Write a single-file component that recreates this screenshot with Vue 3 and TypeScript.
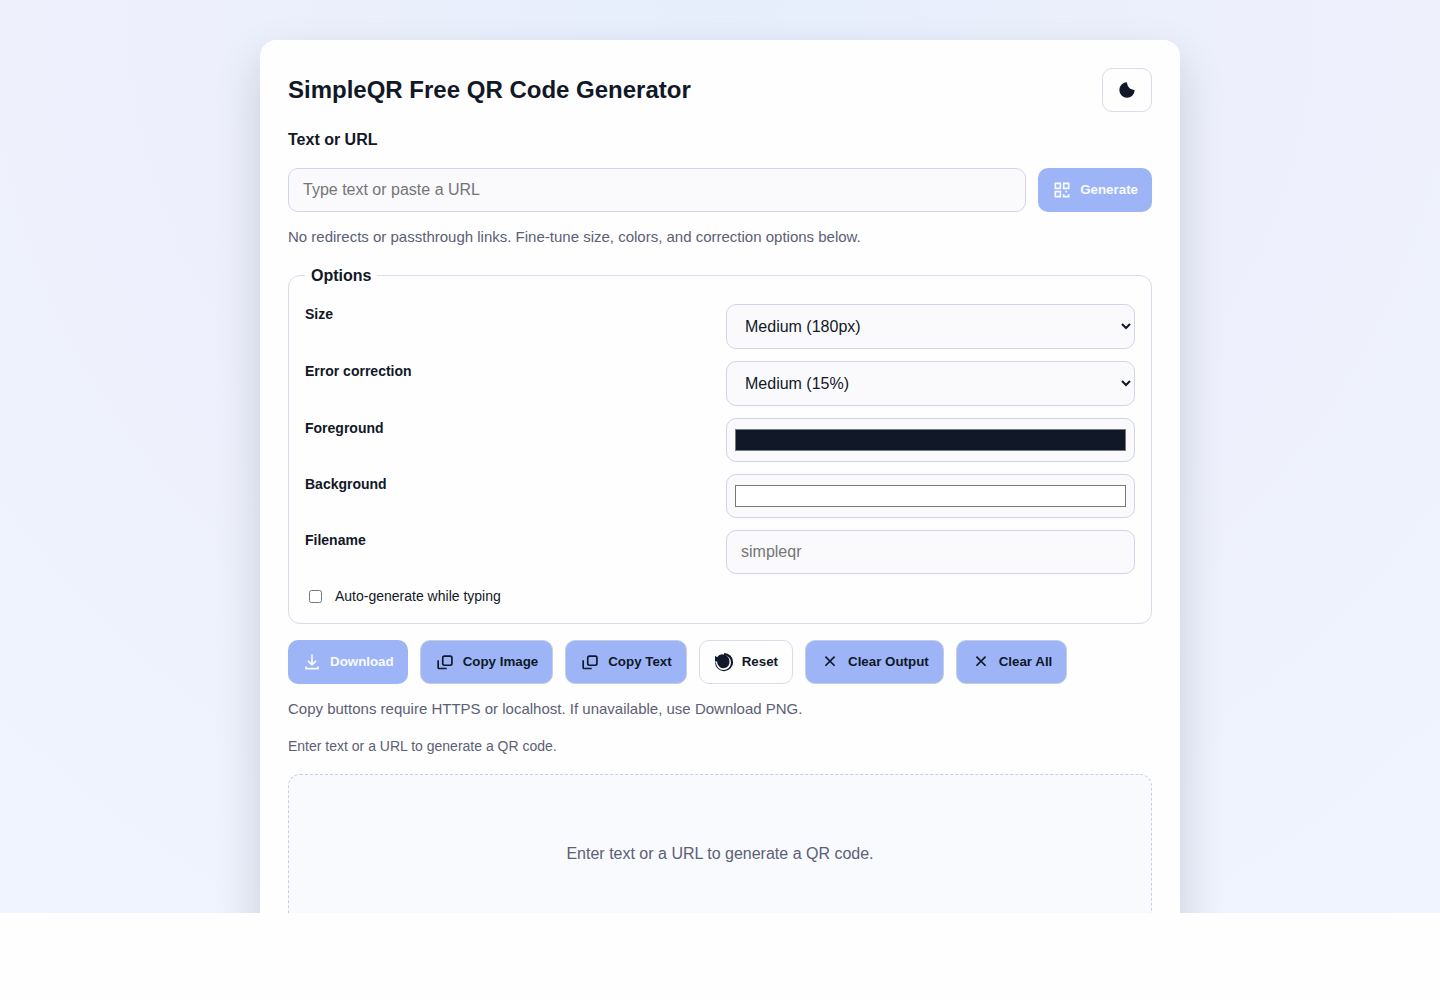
<script setup lang="ts">
import { ref } from 'vue'

interface Choice {
  value: string
  label: string
}

interface Action {
  label: string
  icon: 'download' | 'copy' | 'reset' | 'close'
  kind: 'primary' | 'muted' | 'plain'
}

const sizes: Choice[] = [
  { value: '128', label: 'Small (128px)' },
  { value: '180', label: 'Medium (180px)' },
  { value: '256', label: 'Large (256px)' },
]
const levels: Choice[] = [
  { value: 'L', label: 'Low (7%)' },
  { value: 'M', label: 'Medium (15%)' },
  { value: 'Q', label: 'Quartile (25%)' },
  { value: 'H', label: 'High (30%)' },
]
const actions: Action[] = [
  { label: 'Download', icon: 'download', kind: 'primary' },
  { label: 'Copy Image', icon: 'copy', kind: 'muted' },
  { label: 'Copy Text', icon: 'copy', kind: 'muted' },
  { label: 'Reset', icon: 'reset', kind: 'plain' },
  { label: 'Clear Output', icon: 'close', kind: 'muted' },
  { label: 'Clear All', icon: 'close', kind: 'muted' },
]

const text = ref('')
const size = ref('180')
const level = ref('M')
const foreground = ref('#111827')
const background = ref('#ffffff')
const filename = ref('')
const auto = ref(false)
</script>

<template>
  <div class="stage">
    <main class="card">
      <header class="head">
        <h1>SimpleQR Free QR Code Generator</h1>
        <button class="btn plain" type="button" aria-label="Toggle dark mode">
          <svg class="icon" viewBox="0 0 24 24" fill="currentColor">
            <path d="M12 2.800a9.200 9.200 0 1 0 9.200 9.200C16 12 12 8 12 2.800z" />
          </svg>
        </button>
      </header>

      <label class="title" for="text">Text or URL</label>
      <div class="entry">
        <input id="text" v-model="text" class="field" type="text" placeholder="Type text or paste a URL" />
        <button class="btn primary" type="button">
          <svg class="icon" viewBox="0 0 24 24" fill="currentColor">
            <path
              fill-rule="evenodd"
              d="M3 3h8v8H3zM5 5v4h4V5zM13 3h8v8h-8zM15 5v4h4V5zM3 13h8v8H3zM5 15v4h4v-4zM16 13h2v2h-2zM13 17h2v2h4v-2h2v4h-8z"
            />
          </svg>
          Generate
        </button>
      </div>
      <p class="note">No redirects or passthrough links. Fine-tune size, colors, and correction options below.</p>

      <fieldset class="options">
        <legend>Options</legend>
        <div class="grid">
          <label for="size">Size</label>
          <select id="size" v-model="size" class="field">
            <option v-for="s in sizes" :key="s.value" :value="s.value">{{ s.label }}</option>
          </select>
          <label for="level">Error correction</label>
          <select id="level" v-model="level" class="field">
            <option v-for="l in levels" :key="l.value" :value="l.value">{{ l.label }}</option>
          </select>
          <label for="fg">Foreground</label>
          <input id="fg" v-model="foreground" class="field color" type="color" />
          <label for="bg">Background</label>
          <input id="bg" v-model="background" class="field color" type="color" />
          <label for="filename">Filename</label>
          <input id="filename" v-model="filename" class="field" type="text" placeholder="simpleqr" />
        </div>
        <label class="check">
          <input v-model="auto" type="checkbox" />
          Auto-generate while typing
        </label>
      </fieldset>

      <div class="actions">
        <button v-for="a in actions" :key="a.label" class="btn" :class="a.kind" type="button">
          <svg v-if="a.icon === 'download'" class="icon line" viewBox="0 0 24 24">
            <path d="M12 3v12M7 10.500l5 5 5-5M4.800 17.500V20h14.400v-2.500" />
          </svg>
          <svg v-else-if="a.icon === 'copy'" class="icon line" viewBox="0 0 24 24">
            <rect x="9.300" y="4.900" width="11" height="11" rx="2" />
            <path d="M3.800 10v8.800a1 1 0 0 0 1 1H14" />
          </svg>
          <svg v-else-if="a.icon === 'reset'" class="icon" viewBox="0 0 24 24" fill="currentColor">
            <path d="M12 1.200A10.900 10.900 0 1 1 1.200 12.500H2.400A9 9 0 1 0 12 3.600z" />
            <path d="M1.200 4.500L3.600 6.400A8.200 8.200 0 0 1 18.500 10.500A7.400 7.400 0 0 1 4 13.500L3.800 11.500H1.200z" />
          </svg>
          <svg v-else class="icon line" viewBox="0 0 24 24">
            <path d="M6.500 5.500l11 11M17.500 5.500l-11 11" />
          </svg>
          {{ a.label }}
        </button>
      </div>

      <p class="note">Copy buttons require HTTPS or localhost. If unavailable, use Download PNG.</p>
      <p class="note status">Enter text or a URL to generate a QR code.</p>
      <section class="output">Enter text or a URL to generate a QR code.</section>
    </main>
  </div>
</template>

<style>
body {
  margin: 0;
  background: #fefefe;
}
</style>

<style scoped>
.stage {
  box-sizing: border-box;
  height: calc(100vh - 87px);
  overflow: hidden;
  padding: 40px 20px;
  background: radial-gradient(circle at top, #e6eefc 0%, #edf0fc 45%, #f0f4fe 100%);
  color: #111827;
  font: 16px/24px "Liberation Sans", Arial, sans-serif;
}
.card {
  box-sizing: border-box;
  max-width: 920px;
  margin: 0 auto;
  padding: 28px;
  border-radius: 16px;
  background: #fefefe;
  box-shadow: 0 20px 45px rgba(17, 20, 35, 0.17);
}
.head {
  display: flex;
  align-items: center;
  justify-content: space-between;
  margin-bottom: 16px;
}
h1 {
  margin: 0;
  font-size: 24px;
  line-height: 36px;
}
.title {
  display: block;
  margin-bottom: 16px;
  font-weight: 700;
}
.entry {
  display: flex;
  gap: 12px;
}
.entry .field {
  flex: 1;
  min-width: 0;
}
.field {
  box-sizing: border-box;
  width: 100%;
  height: 44px;
  padding: 12px 14px;
  border: 1px solid #d0d5e8;
  border-radius: 10px;
  background: #fafafd;
  color: #111827;
  font: 16px "Liberation Sans", Arial, sans-serif;
}
.field::placeholder {
  color: #757575;
}
select.field {
  height: 45px;
}
.color {
  padding: 6px;
}
.btn {
  display: inline-flex;
  align-items: center;
  gap: 8px;
  height: 44px;
  padding: 0 14px;
  border: 1px solid #d9dbe8;
  border-radius: 10px;
  background: #fefefe;
  color: #111827;
  font-family: "Liberation Sans", Arial, sans-serif;
  font-weight: 700;
  line-height: 16px;
}
.primary {
  border: 0;
  background: #9db5f7;
  color: #f8faff;
}
.muted {
  border-color: #c5cde3;
  background: #9db5f7;
}
.icon {
  flex: none;
  width: 20px;
  height: 20px;
}
.line {
  fill: none;
  stroke: currentColor;
  stroke-width: 2;
}
.note {
  margin: 14px 0 0;
  color: #5b6075;
  font-size: 15px;
  line-height: 22px;
}
.options {
  min-width: 0;
  margin: 16px 0 0;
  padding: 17px 16px;
  border: 1px solid #d9dbe8;
  border-radius: 12px;
}
legend {
  padding: 0 6px;
  font-weight: 700;
  line-height: 23px;
}
.grid {
  display: grid;
  grid-template-columns: 1fr 1fr;
  gap: 12px;
}
.grid label {
  font-size: 14px;
  font-weight: 700;
  line-height: 20px;
}
.check {
  display: flex;
  align-items: center;
  gap: 10px;
  margin-top: 12px;
  font-size: 14px;
  line-height: 20px;
}
.check input {
  margin: 3px 3px 3px 4px;
}
.actions {
  display: flex;
  flex-wrap: wrap;
  gap: 12px;
  margin-top: 16px;
}
.status {
  font-size: 14px;
  line-height: 24px;
}
.output {
  display: flex;
  align-items: center;
  justify-content: center;
  box-sizing: border-box;
  min-height: 160px;
  margin-top: 16px;
  border: 1px dashed #c3cfe3;
  border-radius: 12px;
  background: #f9fafe;
  color: #5b6075;
}
</style>
